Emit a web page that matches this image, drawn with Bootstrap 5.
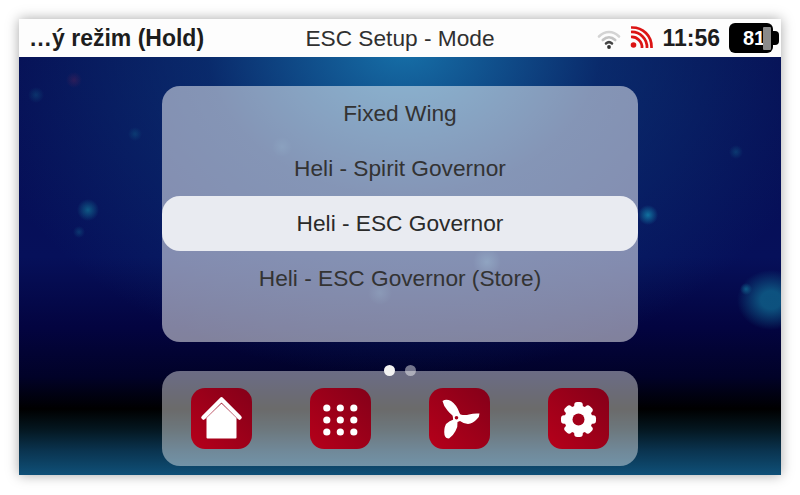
<!DOCTYPE html>
<html lang="cs">

<head>
    <meta charset="UTF-8" />
    <meta name="viewport" content="width=device-width, initial-scale=1.0" />
    <title>ESC Setup - Mode</title>
    <link href="https://cdn.jsdelivr.net/npm/bootstrap@5.3.0/dist/css/bootstrap.min.css" rel="stylesheet" />
    <style>
        html, body {
            height: 100%;
            background: #fff;
            overflow: hidden;
        }

        body {
            padding: 19px;
            font-family: "Liberation Sans", Arial, sans-serif;
            color: #333;
        }

        .screen {
            width: 762px;
            height: 456px;
            box-shadow: 0 0 12px rgba(0, 0, 0, 0.35);
        }

        .top-bar {
            height: 38px;
            background: #fdfdfd;
            font-size: 22.7px;
            line-height: 38px;
            color: #1d1d1d;
        }

        .top-side {
            flex: 1 1 0;
        }

        .top-left-text {
            margin-left: 10px;
            font-size: 23px;
        }

        .top-title {
            color: #303030;
        }

        .clock {
            margin-left: 9px;
            font-size: 23px;
        }

        .batt {
            width: 50px;
            height: 30px;
            margin-left: 9px;
            margin-right: 2px;
        }

        .batt-body {
            width: 44px;
            height: 30px;
            background: #000;
            border-radius: 6px;
            color: #fff;
            font-size: 20px;
            line-height: 31px;
            padding-left: 14px;
        }

        .batt-nub {
            right: 0;
            top: 8px;
            width: 7px;
            height: 14px;
            background: #000;
            border-radius: 0 4px 4px 0;
        }

        .batt-level {
            left: 34px;
            top: 4px;
            width: 8px;
            height: 23px;
            background: #8a8a8a;
            border-radius: 1px;
        }

        .desk {
            height: 418px;
            padding-top: 29px;
            background:
                radial-gradient(circle 10px at 629px 158px, rgba(20, 150, 185, .7), transparent),
                radial-gradient(circle 11px at 69px 153px, rgba(20, 135, 160, .6), transparent),
                radial-gradient(circle 6px at 60px 175px, rgba(20, 120, 150, .35), transparent),
                radial-gradient(circle 7px at 116px 77px, rgba(20, 120, 150, .3), transparent),
                radial-gradient(circle 8px at 17px 38px, rgba(20, 120, 150, .3), transparent),
                radial-gradient(circle 8px at 55px 23px, rgba(150, 40, 80, .25), transparent),
                radial-gradient(circle 7px at 717px 95px, rgba(20, 120, 150, .35), transparent),
                radial-gradient(circle 6px at 727px 232px, rgba(20, 140, 170, .55), transparent),
                radial-gradient(ellipse 34px 30px at 752px 243px, rgba(15, 100, 140, .8) 30%, transparent),
                radial-gradient(circle 14px at 468px 205px, rgba(120, 220, 240, .22), transparent),
                radial-gradient(circle 12px at 361px 236px, rgba(120, 220, 240, .14), transparent),
                radial-gradient(circle 10px at 263px 90px, rgba(120, 220, 240, .1), transparent),
                radial-gradient(ellipse 440px 330px at 385px -10px, rgba(22, 112, 168, 1) 0, rgba(12, 62, 124, .6) 45%, rgba(10, 30, 100, 0) 100%),
                linear-gradient(180deg, #060c52 0, #06105a 200px, #030440 270px, #010228 320px, #000 352px, #04161f 372px, #0a3450 394px, #0f5078 418px);
        }

        .menu-panel {
            width: 476px;
            height: 256px;
            border-radius: 18px;
            background: rgba(255, 255, 255, 0.5);
            font-size: 22.7px;
        }

        .menu-row {
            height: 55px;
            line-height: 55px;
            text-align: center;
        }

        .menu-row.picked {
            background: #e9ebf1;
            border-radius: 18px;
            color: #2a2a2a;
        }

        .dock {
            width: 476px;
            height: 95px;
            margin-top: 29px;
            border-radius: 18px;
            background: rgba(255, 255, 255, 0.42);
            padding: 17px 29px 0 29px;
        }

        .page-dots {
            top: -6px;
            left: 222px;
            gap: 10px;
        }

        .page-dot {
            width: 11px;
            height: 11px;
            border-radius: 50%;
            background: rgba(255, 255, 255, .45);
        }

        .page-dot.on {
            background: #f2f2f2;
        }

        .app-tile {
            width: 61px;
            height: 61px;
            border-radius: 14px;
            background: linear-gradient(45deg, #b6001a, #840019);
        }
    </style>
</head>

<body>
    <div class="screen d-flex flex-column overflow-hidden">
        <!-- status bar -->
        <div class="top-bar d-flex align-items-center">
            <div class="top-side fw-bold text-nowrap"><div class="top-left-text">…ý režim (Hold)</div></div>
            <div class="top-title text-nowrap">ESC Setup - Mode</div>
            <div class="top-side d-flex align-items-center justify-content-end">
                <svg width="24" height="24" viewBox="0 0 24 24" fill="none" stroke-linecap="round">
                    <path d="M2 10.5C8 4.5 16 4.5 22 10.5" stroke="#d4d4d4" stroke-width="2.6" />
                    <path d="M5.8 14C9.5 10.5 14.5 10.5 18.2 14" stroke="#c4c4c4" stroke-width="2.6" />
                    <path d="M9 17.4C11 15.8 13 15.8 15 17.4" stroke="#444" stroke-width="2.6" />
                    <circle cx="12" cy="21" r="1.9" fill="#333" />
                </svg>
                <svg class="ms-2" width="24" height="24" viewBox="0 0 24 24" fill="none" stroke="#dc1414" stroke-width="2.7">
                    <circle cx="4.5" cy="19" r="2.8" fill="#dc1414" stroke="none" />
                    <path d="M2 11C8 10.5 13.5 16 13 22" />
                    <path d="M2 6C11 5.5 18.5 13 18 22" />
                    <path d="M2 1.5C14 1 23 10 22.5 22" />
                </svg>
                <span class="clock fw-bold">11:56</span>
                <div class="batt position-relative">
                    <div class="batt-body fw-bold">81</div>
                    <div class="batt-nub position-absolute"></div>
                    <div class="batt-level position-absolute"></div>
                </div>
            </div>
        </div>

        <div class="desk">
            <div class="menu-panel mx-auto">
                <div class="menu-row">Fixed Wing</div>
                <div class="menu-row">Heli - Spirit Governor</div>
                <div class="menu-row picked">Heli - ESC Governor</div>
                <div class="menu-row">Heli - ESC Governor (Store)</div>
            </div>

            <div class="dock mx-auto position-relative d-flex justify-content-between">
                <div class="page-dots position-absolute d-flex">
                    <div class="page-dot on"></div>
                    <div class="page-dot"></div>
                </div>

                <div class="app-tile">
                    <svg width="61" height="61" viewBox="0 0 61 61">
                        <path d="M12.5 29.5L30.5 11.5L48.5 29.5" fill="none" stroke="#fff" stroke-width="4.5" stroke-linecap="round" stroke-linejoin="round" />
                        <path d="M15.5 30L30.5 15.5L45.5 30V49.5a1 1 0 0 1-1 1H16.5a1 1 0 0 1-1-1Z" fill="#fff" />
                    </svg>
                </div>
                <div class="app-tile">
                    <svg width="61" height="61" viewBox="0 0 61 61" fill="#fff">
                        <circle cx="16.8" cy="20" r="3.6" /><circle cx="30.3" cy="20" r="3.6" /><circle cx="43.8" cy="20" r="3.6" />
                        <circle cx="16.8" cy="32" r="3.6" /><circle cx="30.3" cy="32" r="3.6" /><circle cx="43.8" cy="32" r="3.6" />
                        <circle cx="16.8" cy="44" r="3.6" /><circle cx="30.3" cy="44" r="3.6" /><circle cx="43.8" cy="44" r="3.6" />
                    </svg>
                </div>
                <div class="app-tile">
                    <svg width="61" height="61" viewBox="0 0 61 61">
                        <path d="M13.5 13Q17 10.5 22 13Q28 17 30.5 25L31.5 26.5Q36 27.5 40 26.5Q45 25 50.5 25.5Q50.5 29 48 31Q44 35.5 39 36Q35 36 31 33L28.5 34Q29 39 26.5 43Q24 48 20 50.5Q16.5 50.5 15.5 47Q14.5 41 17 36Q20.5 32.5 24.5 31.5L23.5 27.5Q20.5 25 18.5 22.5Q14.5 18 13.5 13Z" fill="#fff" />
                        <circle cx="27.5" cy="29.7" r="3.6" fill="#fff" />
                        <circle cx="27.5" cy="29.7" r="1.8" fill="#a80019" />
                    </svg>
                </div>
                <div class="app-tile">
                    <svg width="61" height="61" viewBox="0 0 61 61">
                        <g fill="#fff">
                            <rect x="26.2" y="14" width="8.6" height="35" rx="3" />
                            <rect x="26.2" y="14" width="8.6" height="35" rx="3" transform="rotate(45 30.5 31.5)" />
                            <rect x="26.2" y="14" width="8.6" height="35" rx="3" transform="rotate(90 30.5 31.5)" />
                            <rect x="26.2" y="14" width="8.6" height="35" rx="3" transform="rotate(135 30.5 31.5)" />
                        </g>
                        <circle cx="30.5" cy="31.5" r="10" fill="none" stroke="#fff" stroke-width="8" />
                        <circle cx="30.5" cy="31.5" r="6" fill="#a30019" />
                    </svg>
                </div>
            </div>
        </div>
    </div>

    <script src="https://cdn.jsdelivr.net/npm/bootstrap@5.3.0/dist/js/bootstrap.bundle.min.js"></script>
</body>

</html>
